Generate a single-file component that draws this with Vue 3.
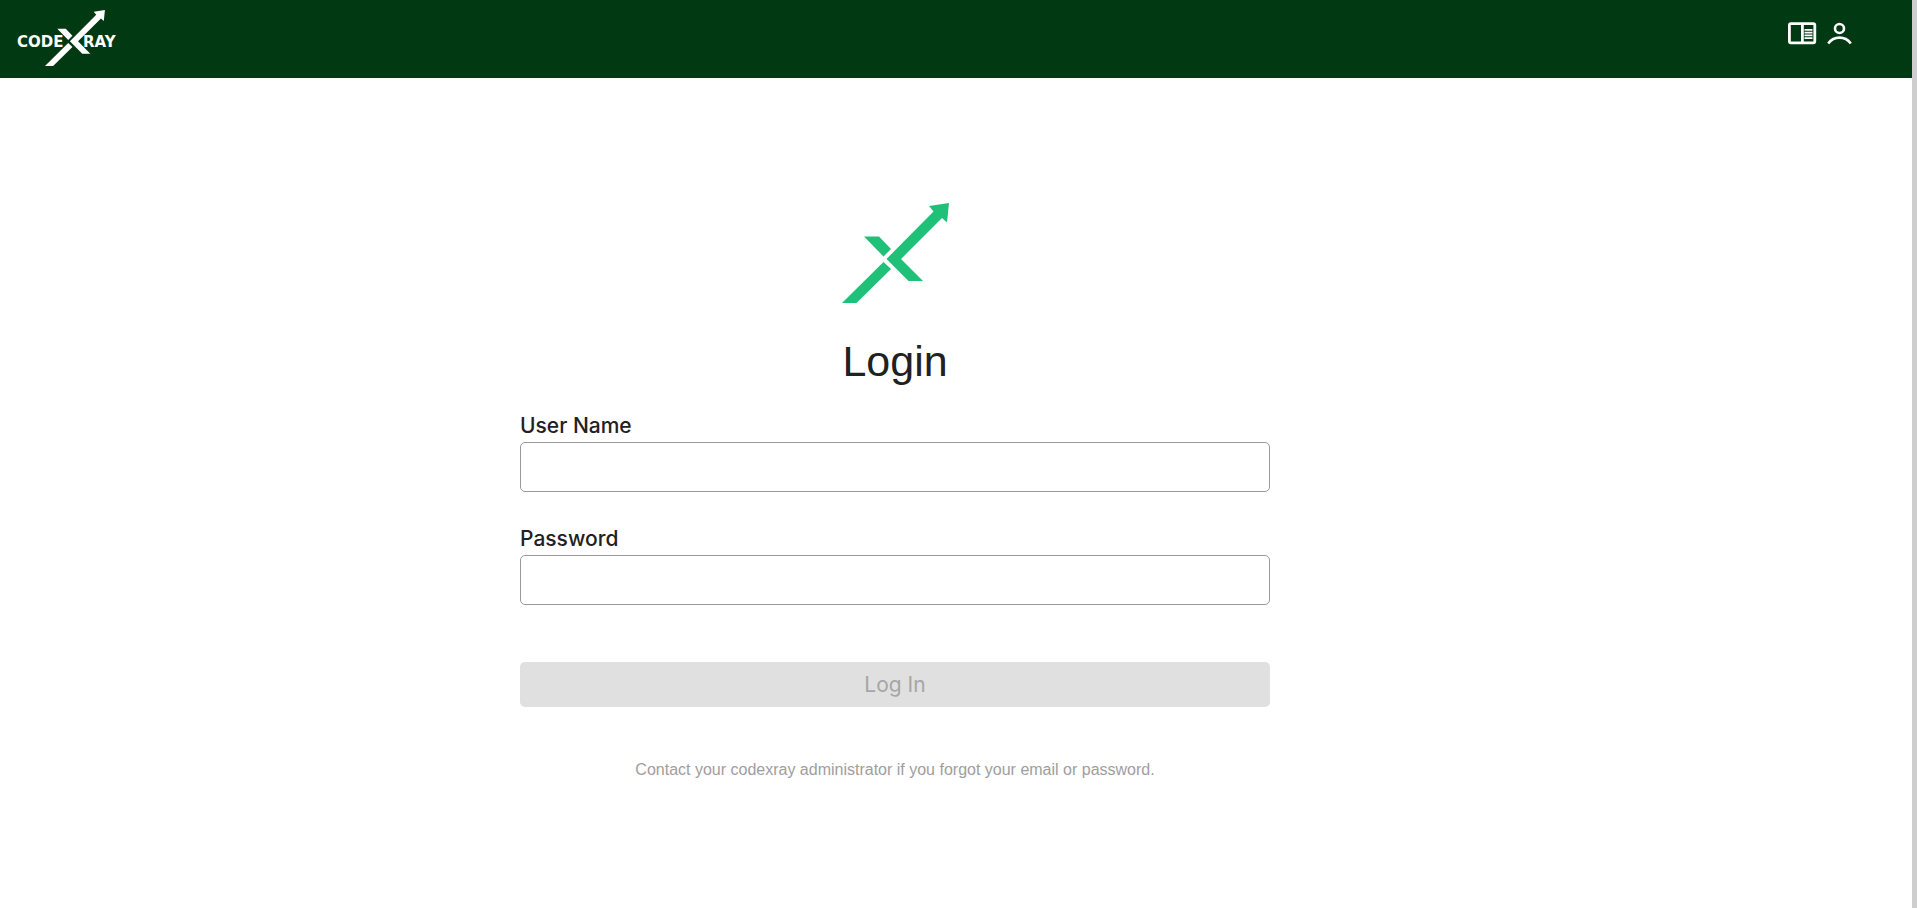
<script setup>
import { ref } from 'vue'

const username = ref('')
const password = ref('')
</script>

<template>
  <div class="shell">
    <div class="page">
      <header class="topbar">
        <a class="brand" href="#" aria-label="CodeXray home">
          <svg width="100" height="56" viewBox="0 0 100 56" fill="#fff">
            <text class="wordmark" x="-1" y="37">CODE</text>
            <text class="wordmark" x="65" y="37">RAY</text>
            <g transform="translate(27 0) scale(.56) translate(-21 -13)">
              <path d="M128 13 108 16 112.5 21.5 65.5 69 87.5 91H102L80 69 121 28 126 32.5Z" />
              <path d="M43 46.5H58L70 59 62.5 66.5Z" />
              <path d="M62.5 72 70 79 35.500 113H21Z" />
            </g>
          </svg>
        </a>
        <nav class="actions" aria-label="Account">
          <a href="#" aria-label="Documentation">
            <svg width="28" height="22" viewBox="0 0 28 22" fill="none" stroke="#fff">
              <rect x="1.400" y="1.600" width="25.400" height="19.200" rx="1.500" stroke-width="2.800" />
              <path d="M14.400 1V21" stroke-width="2.800" />
              <path d="M16.500 7.800H24.500M16.500 10.600H24.500M16.500 13.400H24.500M16.500 16.200H24.500" stroke-width="1.700" />
            </svg>
          </a>
          <a href="#" aria-label="Profile">
            <svg width="26" height="22" viewBox="0 0 26 22" fill="none" stroke="#fff" stroke-width="2.600">
              <circle cx="13.500" cy="6.500" r="4.500" />
              <path d="M2.200 21.500C8 13.700 19 13.700 24.800 21.500" />
            </svg>
          </a>
        </nav>
      </header>

      <main class="content">
        <form class="login" @submit.prevent>
          <svg class="mark" width="107" height="100" viewBox="21 13 107 100" fill="#1fc077" aria-hidden="true">
            <path d="M128 13 108 16 112.5 21.5 65.5 69 87.5 91H102L80 69 121 28 126 32.5Z" />
            <path d="M43 46.5H58L70 59 62.5 66.5Z" />
            <path d="M62.5 72 70 79 35.500 113H21Z" />
          </svg>
          <h1>Login</h1>
          <div class="fields">
            <div class="field">
              <label for="username">User Name</label>
              <input id="username" v-model="username" type="text" autocomplete="username" />
            </div>
            <div class="field">
              <label for="password">Password</label>
              <input id="password" v-model="password" type="password" autocomplete="current-password" />
            </div>
          </div>
          <button type="submit" :disabled="!username || !password">Log In</button>
          <p class="note">Contact your codexray administrator if you forgot your email or password.</p>
        </form>
      </main>
    </div>
    <div class="rail" aria-hidden="true"></div>
  </div>
</template>

<style>
body {
  margin: 0;
  background: #fff;
}
</style>

<style scoped>
.shell {
  display: flex;
  min-height: 100vh;
  color: #212121;
  font-family: "Liberation Sans", Arial, sans-serif;
}
.page {
  flex: 1;
  min-width: 0;
}
.rail {
  width: 5px;
  background: #cecece;
}
.topbar {
  display: flex;
  justify-content: space-between;
  align-items: flex-start;
  height: 78px;
  box-sizing: border-box;
  padding: 10px 60px 0 18px;
  background: #003912;
}
.brand svg,
.actions svg {
  display: block;
  overflow: visible;
}
.wordmark {
  font: 700 15px "DejaVu Sans", sans-serif;
}
.actions {
  display: flex;
  gap: 10px;
  padding-top: 12px;
}
.content {
  display: flex;
  justify-content: center;
  padding: 125px 122px 48px 0;
}
.login {
  display: flex;
  flex-direction: column;
  width: 100%;
  max-width: 750px;
}
.mark {
  align-self: center;
}
h1 {
  margin: 34px 0 29px;
  font-size: 43px;
  line-height: 48px;
  font-weight: 400;
  text-align: center;
}
.fields {
  display: grid;
  gap: 35px;
}
.field {
  display: grid;
  gap: 4px;
}
label {
  font: 500 21px/24px Inter, sans-serif;
}
input {
  width: 100%;
  height: 50px;
  box-sizing: border-box;
  padding: 0 12px;
  border: 1px solid #999;
  border-radius: 5px;
  background: #fff;
  color: inherit;
  font: 400 21px Inter, sans-serif;
}
button {
  height: 45px;
  margin-top: 57px;
  border: 0;
  border-radius: 5px;
  background: #1fc077;
  color: #fff;
  font: 400 21px Inter, sans-serif;
}
button:disabled {
  background: #e0e0e0;
  color: #a6a6a6;
}
.note {
  margin: 53px 0 0;
  color: #9e9e9e;
  font-size: 16px;
  line-height: 20px;
  text-align: center;
}
</style>
